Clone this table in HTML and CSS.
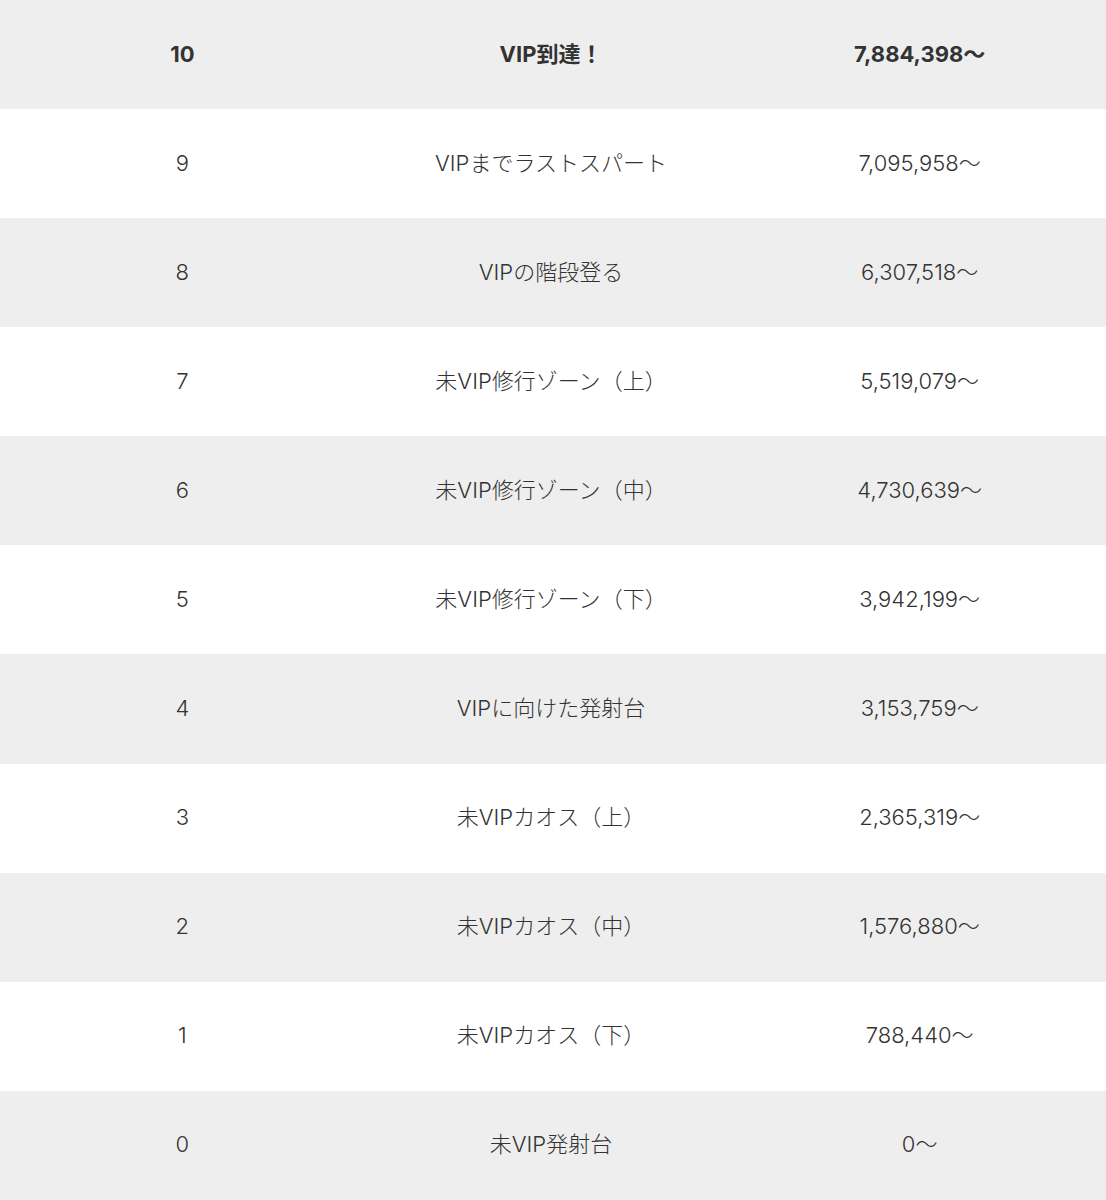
FILE: index.html
```html
<!DOCTYPE html>
<html lang="ja">
<head>
<meta charset="utf-8">
<link rel="stylesheet" href="styles.css">
</head>
<body>
<table class="rank-table">
  <tbody>
    <tr class="row-top"><td>10</td><td>VIP到達！</td><td>7,884,398～</td></tr>
    <tr><td>9</td><td>VIPまでラストスパート</td><td>7,095,958～</td></tr>
    <tr><td>8</td><td>VIPの階段登る</td><td>6,307,518～</td></tr>
    <tr><td>7</td><td>未VIP修行ゾーン（上）</td><td>5,519,079～</td></tr>
    <tr><td>6</td><td>未VIP修行ゾーン（中）</td><td>4,730,639～</td></tr>
    <tr><td>5</td><td>未VIP修行ゾーン（下）</td><td>3,942,199～</td></tr>
    <tr><td>4</td><td>VIPに向けた発射台</td><td>3,153,759～</td></tr>
    <tr><td>3</td><td>未VIPカオス（上）</td><td>2,365,319～</td></tr>
    <tr><td>2</td><td>未VIPカオス（中）</td><td>1,576,880～</td></tr>
    <tr><td>1</td><td>未VIPカオス（下）</td><td>788,440～</td></tr>
    <tr><td>0</td><td>未VIP発射台</td><td>0～</td></tr>
  </tbody>
</table>
</body>
</html>
```
FILE: styles.css
```css
html, body {
  margin: 0;
  padding: 0;
  background: #ffffff;
}
body {
  font-family: Inter, "Noto Sans CJK JP", "Noto Sans", sans-serif;
  color: #333333;
}
.rank-table {
  width: 100%;
  border-collapse: collapse;
  table-layout: fixed;
}
.rank-table td {
  width: 33.333%;
  height: 109.09px;
  padding: 0 4px 2px 0;
  box-sizing: border-box;
  text-align: center;
  vertical-align: middle;
  font-size: 22px;
  font-weight: 300;
  line-height: 1;
}
.rank-table tr:nth-child(odd) {
  background: #eeeeee;
}
.rank-table .row-top td {
  font-weight: 700;
}
```
